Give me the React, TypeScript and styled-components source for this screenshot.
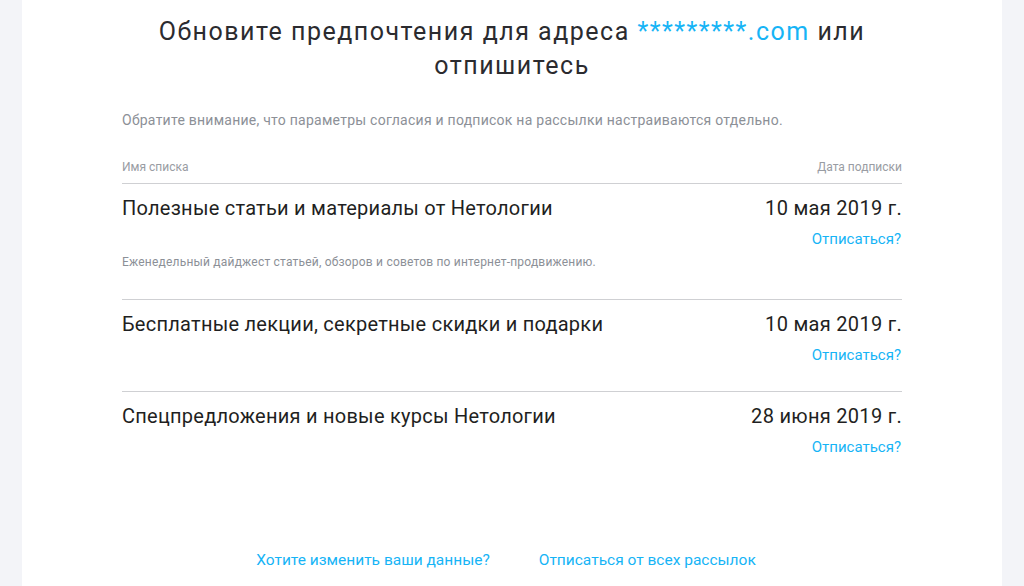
import React from "react";
import styled, { createGlobalStyle } from "styled-components";

const Global = createGlobalStyle`
  html, body { margin: 0; padding: 0; background: #f3f4f8; }
  body { font-family: Roboto, "Noto Sans", Arial, sans-serif; }
`;

const Page = styled.div`
  display: flex;
  justify-content: center;
  min-height: 586px;
`;

const Card = styled.main`
  width: 980px;
  background: #fff;
  box-sizing: border-box;
  padding: 15px 100px 40px;
`;

const Title = styled.h1`
  margin: 0 auto;
  width: 760px;
  text-align: center;
  font-weight: 400;
  font-size: 25px;
  line-height: 34px;
  letter-spacing: 1.5px;
  color: #2b2b2f;
`;

const Accent = styled.span`
  color: #16b4f6;
`;

const Note = styled.p`
  margin: 28px 0 0;
  font-size: 14px;
  line-height: 18px;
  letter-spacing: 0.25px;
  color: #8c9097;
`;

const Head = styled.div`
  display: flex;
  justify-content: space-between;
  margin-top: 31px;
  padding-bottom: 9px;
  font-size: 12px;
  line-height: 14px;
  color: #999ca3;
  border-bottom: 1px solid #cfd0d3;
`;

const Row = styled.section<{ $last?: boolean }>`
  display: flex;
  flex-direction: column;
  padding: 12px 0 26px;
  border-bottom: ${(p) => (p.$last ? "none" : "1px solid #cfd0d3")};
`;

const RowTop = styled.div`
  display: flex;
  justify-content: space-between;
  align-items: flex-start;
`;

const ListName = styled.div`
  font-size: 20px;
  line-height: 24px;
  letter-spacing: 0.25px;
  color: #1f1f22;
`;

const Right = styled.div`
  display: flex;
  flex-direction: column;
  align-items: flex-end;
`;

const DateText = styled.div`
  font-size: 20px;
  line-height: 24px;
  letter-spacing: 0.3px;
  color: #1f1f22;
`;

const Link = styled.a<{ $size?: number }>`
  color: #16b4f6;
  text-decoration: none;
  font-size: ${(p) => p.$size ?? 15}px;
  line-height: 20px;
  cursor: pointer;
`;

const Unsub = styled(Link)`
  margin-top: 9px;
  margin-right: 1px;
`;

const Desc = styled.div`
  margin-top: 5px;
  margin-bottom: 3px;
  font-size: 12px;
  line-height: 16px;
  letter-spacing: 0.2px;
  color: #8c9097;
`;

const Footer = styled.div`
  display: flex;
  justify-content: center;
  gap: 49px;
  margin-top: 67px;
  padding-right: 12px;
`;

const rows = [
  {
    name: "Полезные статьи и материалы от Нетологии",
    date: "10 мая 2019 г.",
    desc: "Еженедельный дайджест статьей, обзоров и советов по интернет-продвижению.",
  },
  { name: "Бесплатные лекции, секретные скидки и подарки", date: "10 мая 2019 г." },
  { name: "Спецпредложения и новые курсы Нетологии", date: "28 июня 2019 г." },
];

export default function App() {
  return (
    <Page>
      <Global />
      <Card>
        <Title>
          Обновите предпочтения для адреса <Accent>*********.com</Accent> или отпишитесь
        </Title>
        <Note>
          Обратите внимание, что параметры согласия и подписок на рассылки настраиваются отдельно.
        </Note>
        <Head>
          <span>Имя списка</span>
          <span>Дата подписки</span>
        </Head>
        {rows.map((r, i) => (
          <Row key={r.name} $last={i === rows.length - 1}>
            <RowTop>
              <ListName>{r.name}</ListName>
              <Right>
                <DateText>{r.date}</DateText>
                <Unsub>Отписаться?</Unsub>
              </Right>
            </RowTop>
            {r.desc && <Desc>{r.desc}</Desc>}
          </Row>
        ))}
        <Footer>
          <Link $size={15.5}>Хотите изменить ваши данные?</Link>
          <Link $size={15.5}>Отписаться от всех рассылок</Link>
        </Footer>
      </Card>
    </Page>
  );
}
